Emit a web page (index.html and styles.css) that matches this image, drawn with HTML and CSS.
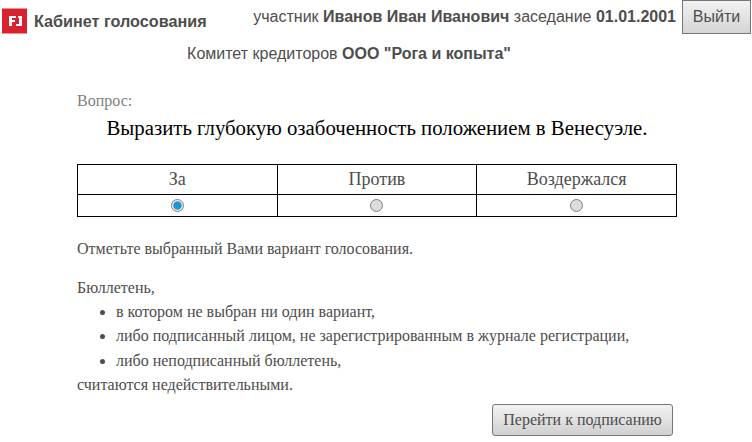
FILE: index.html
```html
<!DOCTYPE html>
<html lang="ru">

<head>
  <meta charset="UTF-8">
  <meta name="viewport" content="width=device-width, initial-scale=1.0">
  <title>Кабинет голосования</title>
  <link rel="stylesheet" href="styles.css">
</head>

<body>

  <div class="header">
    <div class="brand">
      <svg class="logo" width="25" height="26" viewBox="0 0 25 26">
        <rect width="25" height="26" fill="#d9222f"/>
        <rect width="25" height="1" fill="#ee8f95"/>
        <rect y="25" width="25" height="1" fill="#ee8f95"/>
        <path d="M7 8h7v2h-4v2h3v2h-3v4H7z M16 8h4v10h-6v-2h3v-6h-1z" fill="#fff"/>
      </svg>
      <span class="brand-name">Кабинет голосования</span>
    </div>
    <div class="session">
      <span>участник <b>Иванов Иван Иванович</b> заседание <b>01.01.2001</b></span>
      <button class="logout">Выйти</button>
    </div>
  </div>

  <div class="committee">Комитет кредиторов <b>ООО "Рога и копыта"</b></div>

  <div class="content">
    <div class="label">Вопрос:</div>
    <div class="question">Выразить глубокую озабоченность положением в Венесуэле.</div>

    <table class="vote">
      <tr>
        <th>За</th>
        <th>Против</th>
        <th>Воздержался</th>
      </tr>
      <tr>
        <td><span class="radio checked"></span></td>
        <td><span class="radio"></span></td>
        <td><span class="radio"></span></td>
      </tr>
    </table>

    <p class="hint">Отметьте выбранный Вами вариант голосования.</p>

    <div class="rules">
      <div>Бюллетень,</div>
      <ul>
        <li>в котором не выбран ни один вариант,</li>
        <li>либо подписанный лицом, не зарегистрированным в журнале регистрации,</li>
        <li>либо неподписанный бюллетень,</li>
      </ul>
      <div>считаются недействительными.</div>
    </div>

    <div class="actions">
      <button class="next">Перейти к подписанию</button>
    </div>
  </div>

</body>

</html>
```

FILE: styles.css
```css
body {
  margin: 0;
  background-color: #fff;
  color: #4d4d4d;
  font-family: "Liberation Serif", serif;
  font-size: 16px;
}

.header {
  display: flex;
  justify-content: space-between;
  align-items: flex-start;
  height: 35px;
  padding: 0 1px 0 2px;
  font-family: "Liberation Sans", sans-serif;
}

.brand {
  display: flex;
  align-items: center;
  gap: 7px;
  margin-top: 8px;
}

.logo {
  display: block;
}

.brand-name {
  font-size: 16.2px;
  font-weight: bold;
}

.session {
  display: flex;
  align-items: center;
  gap: 6px;
  font-size: 16px;
}

.logout {
  width: 69px;
  height: 34px;
  border: 1px solid #777;
  background: linear-gradient(#f2f2f2, #d4d4d4);
  color: #4d4d4d;
  font-family: "Liberation Sans", sans-serif;
  font-size: 16px;
  padding: 0;
}

.committee {
  margin-top: 10px;
  padding-right: 54px;
  text-align: center;
  font-family: "Liberation Sans", sans-serif;
  font-size: 16px;
}

.content {
  width: 600px;
  margin: 29px 0 0 77px;
}

.label {
  color: #808080;
}

.question {
  margin-top: 6px;
  text-align: center;
  color: #000;
  font-size: 20.8px;
}

.vote {
  width: 600px;
  margin-top: 24px;
  border-collapse: collapse;
  table-layout: fixed;
}

.vote th,
.vote td {
  border: 1px solid #000;
  padding: 0;
  text-align: center;
}

.vote th {
  height: 29px;
  font-size: 18px;
  font-weight: normal;
}

.vote td {
  height: 21px;
}

.radio {
  display: inline-block;
  box-sizing: border-box;
  width: 13px;
  height: 13px;
  margin-top: 3px;
  border: 1px solid #808080;
  border-radius: 50%;
  background-color: #dcdcdc;
}

.radio.checked {
  background: radial-gradient(circle, #1e95d6 0 3.8px, #eee 4.6px);
}

.hint {
  margin: 23px 0 0;
}

.rules {
  margin-top: 18px;
  line-height: 24.2px;
}

.rules ul {
  margin: 0;
  padding-left: 39px;
}

.actions {
  display: flex;
  justify-content: flex-end;
  margin: 7px 4px 0 0;
}

.next {
  width: 181px;
  height: 32px;
  border: 1px solid #777;
  border-radius: 3px;
  background: linear-gradient(#f2f2f2, #d0d0d0);
  color: #4d4d4d;
  font-family: "Liberation Serif", serif;
  font-size: 16px;
  padding: 0;
}
```
